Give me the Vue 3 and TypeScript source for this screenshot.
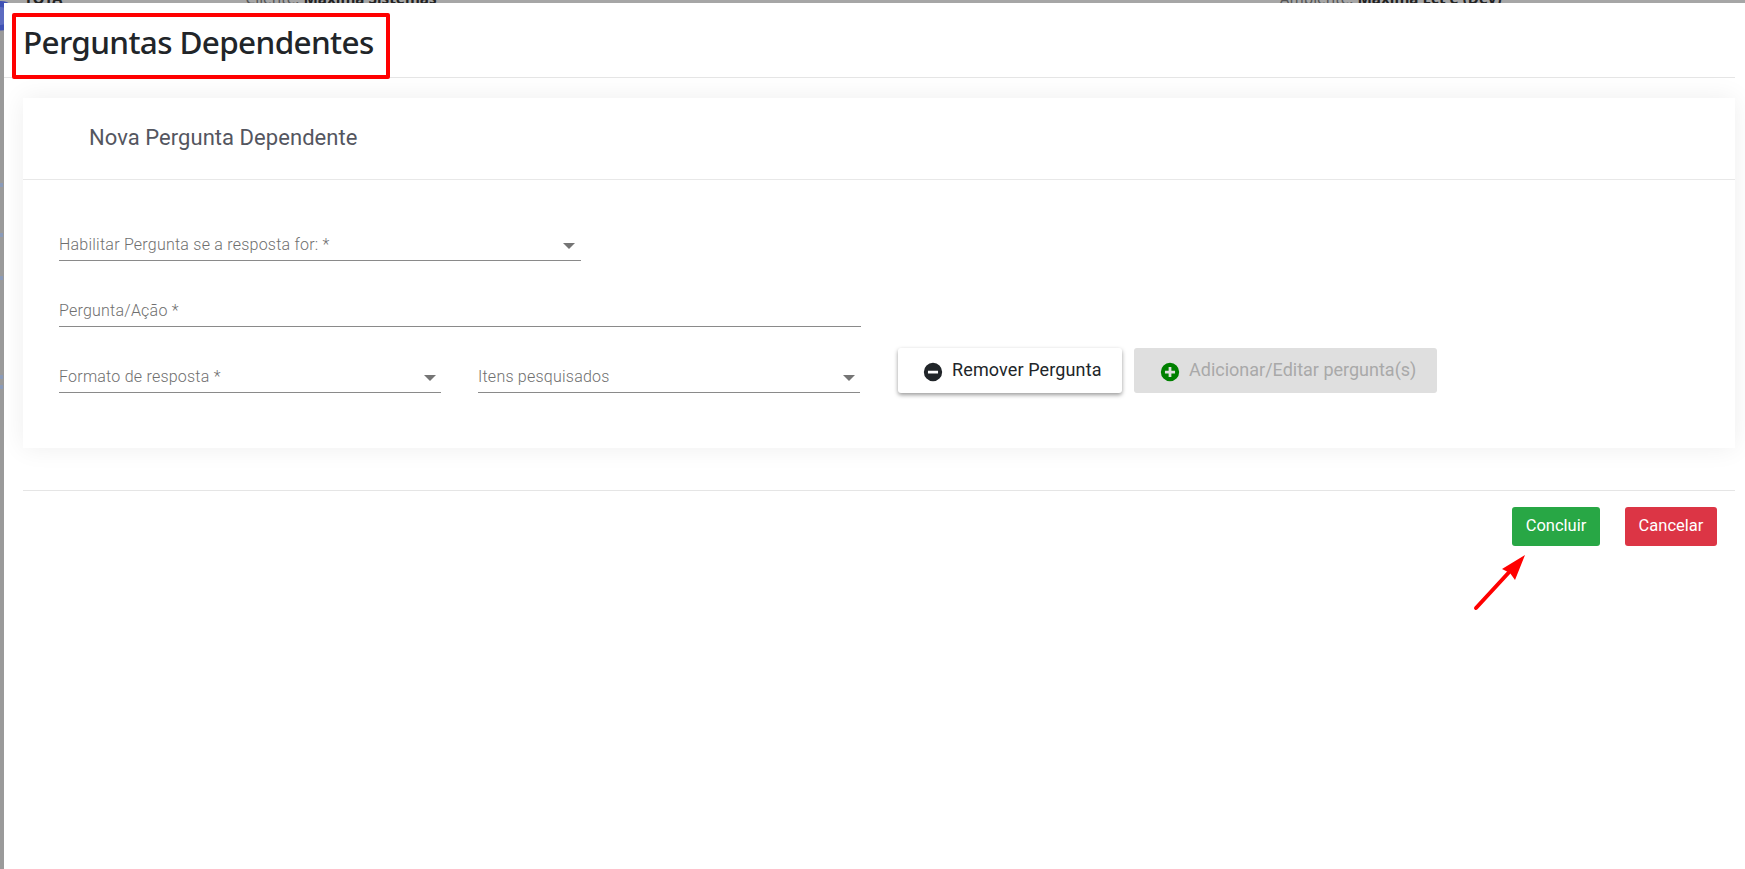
<script setup lang="ts">
interface Field {
  label: string
  kind: 'select' | 'input'
}

const firstRow: Field = { label: 'Habilitar Pergunta se a resposta for: *', kind: 'select' }
const secondRow: Field = { label: 'Pergunta/Ação *', kind: 'input' }
const thirdRow: Field[] = [
  { label: 'Formato de resposta *', kind: 'select' },
  { label: 'Itens pesquisados', kind: 'select' },
]
const edgeMarks: number[] = [180, 230, 273, 372, 382]
</script>

<template>
  <div class="page">
    <svg class="logo-peek" width="20" height="34" viewBox="0 0 20 34">
      <circle cx="1" cy="16" r="15" fill="#3f51b5" />
      <circle cx="1" cy="16" r="9" fill="#5c6bc0" />
    </svg>
    <div class="behind">
      <span class="behind-a">TOTA</span>
      <span class="behind-b">Cliente: <b>Maxima Sistemas</b></span>
      <span class="behind-c">Ambiente: <b>Maxima Ect e (Dev)</b></span>
    </div>
    <div class="body-row">
      <div class="edge">
        <i v-for="m in edgeMarks" :key="m" class="edge-mark" :style="{ top: m + 'px' }"></i>
      </div>
      <main class="modal">
        <header class="modal-head">
          <h1>Perguntas Dependentes</h1>
          <div class="mark-box"></div>
        </header>
        <div class="content">
          <section class="card">
            <div class="card-title">Nova Pergunta Dependente</div>
            <div class="card-body">
              <div class="field f-first">
                <span>{{ firstRow.label }}</span>
                <i class="caret"></i>
              </div>
              <div class="field f-second">
                <span>{{ secondRow.label }}</span>
              </div>
              <div class="row-three">
                <div v-for="f in thirdRow" :key="f.label" class="field f-third">
                  <span>{{ f.label }}</span>
                  <i class="caret"></i>
                </div>
                <button class="btn-remove" type="button">
                  <svg viewBox="0 0 24 24" class="ico"><path fill="#212529" d="M12 2a10 10 0 1 0 0 20 10 10 0 0 0 0-20zm5.5 11.5h-11v-3h11z"/></svg>
                  Remover Pergunta
                </button>
                <button class="btn-add" type="button" disabled>
                  <svg viewBox="0 0 24 24" class="ico"><path fill="#008000" d="M12 2a10 10 0 1 0 0 20 10 10 0 0 0 0-20zm5.5 11.5h-4v4h-3v-4h-4v-3h4v-4h3v4h4z"/></svg>
                  Adicionar/Editar pergunta(s)
                </button>
              </div>
            </div>
          </section>
          <div class="actions">
            <button class="act act-ok" type="button">Concluir</button>
            <button class="act act-no" type="button">Cancelar</button>
          </div>
        </div>
        <svg class="arrow" width="60" height="65" viewBox="0 0 60 65">
          <path d="M4 60 L40 21" stroke="#ff0000" stroke-width="4" stroke-linecap="round" fill="none"/>
          <path d="M53 7 L43 32 L38 25 L30 21 Z" fill="#ff0000"/>
        </svg>
      </main>
    </div>
  </div>
</template>

<style>
html, body { margin: 0; background: #a6a6a6; }
</style>

<style scoped>
.page {
  width: 1745px;
  height: 869px;
  background: #a6a6a6;
  display: flex;
  flex-direction: column;
  overflow: hidden;
  position: relative;
  font-family: Roboto, "Liberation Sans", sans-serif;
}
.logo-peek { position: absolute; left: 0; top: 0; }
.behind {
  height: 3px;
  flex: none;
  overflow: hidden;
  display: flex;
  align-items: flex-end;
  font: 15.3px/20px "Noto Sans", sans-serif;
  color: #555;
  position: relative;
}
.behind span { flex: none; margin-bottom: -5px; }
.behind b { color: #222; }
.behind-a { margin-left: 24px; color: #222; font-weight: 700; }
.behind-b { margin-left: 183px; }
.behind-c { margin-left: 843px; }
.behind-c b { margin-left: 0; }
.body-row { flex: 1; display: flex; min-height: 0; position: relative; }
.edge { width: 4px; flex: none; background: linear-gradient(#a6a6a600 0, #a6a6a600 27px, #9a9a9a 28px); position: relative; }
.edge-mark { position: absolute; left: 0; width: 3px; height: 4px; background: #8a9ab8; }
.modal {
  flex: 1;
  background: #fff;
  position: relative;
  display: flex;
  flex-direction: column;
}
.modal-head {
  height: 74px;
  position: relative;
  margin-right: 10px;
  border-bottom: 1px solid #e5e5e5;
}
.modal-head h1 {
  margin: 0;
  padding: 18px 0 0 19px;
  font: 500 31.5px/42px "Noto Sans", sans-serif;
  letter-spacing: -0.65px;
  color: #212529;
}
.mark-box {
  position: absolute;
  left: 8px;
  top: 10px;
  width: 370px;
  height: 58px;
  border: 4px solid #ff0000;
  border-radius: 2px;
}
.content {
  padding: 20px 10px 0 19px;
  display: flex;
  flex-direction: column;
}
.card {
  height: 350px;
  background: #fff;
  box-shadow: 0 0 24px rgba(0, 0, 0, .07);
}
.card-title {
  height: 81px;
  padding: 0 0 0 66px;
  line-height: 79px;
  font-size: 22px;
  font-weight: 400;
  letter-spacing: 0.05px;
  color: #54565f;
  border-bottom: 1px solid #e8e8e8;
}
.card-body { padding: 0 0 0 36px; }
.field {
  display: flex;
  align-items: flex-end;
  justify-content: space-between;
  box-sizing: border-box;
  height: 34px;
  padding-bottom: 5px;
  border-bottom: 1px solid #8a8a8a;
  font-size: 16px;
  font-weight: 300;
  letter-spacing: 0.23px;
  line-height: 20px;
  color: #6f6f6f;
}
.f-first { width: 522px; margin-top: 47px; }
.f-second { width: 802px; margin-top: 32px; }
.row-three { display: flex; align-items: flex-start; margin-top: 21px; }
.f-third { width: 382px; margin-top: 11px; margin-right: 37px; }
.f-third + .f-third { margin-right: 38px; }
.caret {
  width: 0;
  height: 0;
  border-left: 6px solid transparent;
  border-right: 6px solid transparent;
  border-top: 6px solid #757575;
  margin: 0 6px 6px 0;
}
.f-third .caret { margin-right: 5px; }
button {
  display: flex;
  align-items: center;
  height: 45px;
  border: 0;
  border-radius: 3px;
  font: 400 18px Roboto, sans-serif;
  padding: 0 0 2px;
  box-sizing: border-box;
}
.ico { width: 22px; height: 22px; margin: 4px 8px 0 0; flex: none; }
.btn-remove {
  width: 224px;
  padding-left: 24px;
  letter-spacing: 0.12px;
  background: #fff;
  color: #212529;
  box-shadow: 0 2px 4px rgba(0, 0, 0, .4);
}
.btn-add {
  width: 303px;
  margin-left: 12px;
  padding-left: 25px;
  background: #dfdfdf;
  color: #a9a9a9;
}
.actions {
  margin-top: 42px;
  border-top: 1px solid #e5e5e5;
  padding: 16px 18px 0 0;
  display: flex;
  justify-content: flex-end;
  gap: 25px;
}
.act {
  height: 39px;
  justify-content: center;
  color: #fff;
  font-size: 16.5px;
}
.act-ok { width: 88px; background: #28a745; }
.act-no { width: 92px; background: #dc3545; }
.arrow { position: absolute; left: 1468px; top: 545px; }
</style>
